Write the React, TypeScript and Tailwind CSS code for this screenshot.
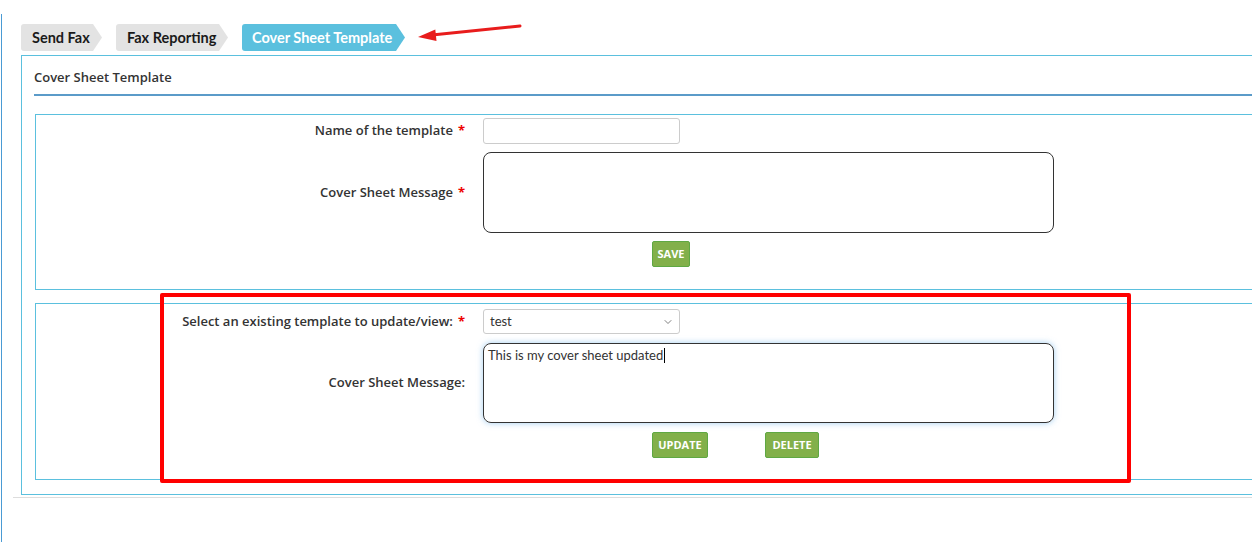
import { ChevronDown } from "lucide-react";

const tabShape =
  "[clip-path:polygon(0_0,calc(100%_-_9px)_0,100%_50%,calc(100%_-_9px)_100%,0_100%)]";

const Req = () => <span className="ml-[5px] align-top text-[13px] font-bold text-[#e00]">*</span>;

const Btn = ({ label, w }: { label: string; w: string }) => (
  <button
    className={`${w} flex h-[26px] items-center justify-center rounded-[2px] border border-[#5fa843] bg-[#82b04a] text-[11px] font-bold text-white`}
  >
    {label}
  </button>
);

export default function App() {
  return (
    <div className="relative h-[542px] w-[1252px] overflow-hidden bg-white font-['Open_Sans',sans-serif] text-[#333]">
      <div className="ml-px mt-[14px] h-[528px] border-l border-[#4a9bd4] pl-[19px] pt-[10px]">
        {/* tabs */}
        <div className="flex h-[27px] gap-[15px] whitespace-nowrap font-['Lato',sans-serif] text-[14.5px] font-bold">
          <div className={`${tabShape} flex w-[81px] shrink-0 items-center rounded-l-[3px] bg-[#e3e3e3] pl-[11px] text-[#1a1a1a]`}>
            Send Fax
          </div>
          <div className={`${tabShape} ml-[-1px] flex w-[112px] shrink-0 items-center rounded-l-[3px] bg-[#e3e3e3] pl-[11px] text-[#1a1a1a]`}>
            Fax Reporting
          </div>
          <div className={`${tabShape} ml-[-1px] flex w-[163px] shrink-0 items-center rounded-l-[3px] bg-[#5bc0de] pl-[10px] text-white`}>
            Cover Sheet Template
          </div>
        </div>

        {/* main panel */}
        <div className="mt-[4px] w-[1300px] border border-[#5bc0de] pb-[14px] pl-[12px] pt-[13px]">
          <div className="text-[13px] font-semibold leading-[16px] text-[#333]">Cover Sheet Template</div>
          <div className="mt-[9px] h-[2px] bg-[#5b9bc9]" />

          {/* create */}
          <div className="ml-px mt-[18px] h-[176px] border border-[#5bc0de] pt-[3px]">
            <div className="grid grid-cols-[429px_1fr] gap-x-[18px] gap-y-[8px] text-[13px] font-semibold">
              <div className="flex items-center justify-end">
                Name of the template
                <Req />
              </div>
              <div className="h-[26px] w-[197px] rounded-[3px] border border-[#ccc]" />
              <div className="flex items-center justify-end">
                Cover Sheet Message
                <Req />
              </div>
              <div className="h-[81px] w-[571px] rounded-[8px] border border-[#333]" />
              <div />
              <div className="pl-[169px]">
                <Btn label="SAVE" w="w-[38px]" />
              </div>
            </div>
          </div>

          {/* update */}
          <div className="ml-px mt-[13px] h-[177px] border border-[#5bc0de] pt-[5px]">
            <div className="grid grid-cols-[429px_1fr] gap-x-[18px] gap-y-[9px] text-[13px] font-semibold">
              <div className="flex items-center justify-end">
                Select an existing template to update/view:
                <Req />
              </div>
              <div className="flex h-[25px] w-[197px] items-center justify-between rounded-[3px] border border-[#ccc] pl-[6px] pr-[5px] font-['Lato',sans-serif] font-normal">
                <span>test</span>
                <ChevronDown size={12} strokeWidth={1.5} className="text-[#555]" />
              </div>
              <div className="flex items-center justify-end">Cover Sheet Message:</div>
              <div className="h-[80px] w-[571px] rounded-[8px] border border-[#333] px-[4px] pt-[1px] font-['Lato',sans-serif] text-[13px] font-normal shadow-[0_0_6px_rgba(102,175,233,0.6)]">
                This is my cover sheet updated
                <span className="ml-px inline-block h-[15px] w-px translate-y-[3px] bg-black" />
              </div>
              <div />
              <div className="flex gap-[57px] pl-[169px]">
                <Btn label="UPDATE" w="w-[56px]" />
                <Btn label="DELETE" w="w-[54px]" />
              </div>
            </div>
          </div>
        </div>

        <div className="ml-[-8px] mt-[2px] h-px w-[1300px] bg-[#ddd]" />
      </div>

      {/* annotation: red frame */}
      <div className="absolute left-[160px] top-[293px] h-[190px] w-[971px] rounded-[2px] border-[4px] border-[#ff0000]" />

      {/* annotation: red arrow */}
      <svg className="absolute left-[410px] top-[18px]" width="115" height="26" viewBox="0 0 115 26">
        <line x1="110" y1="8" x2="22" y2="17" stroke="#e81c1c" strokeWidth="3" strokeLinecap="round" />
        <polygon points="8,19 26.5,23 25.3,11.4" fill="#e81c1c" />
      </svg>
    </div>
  );
}
